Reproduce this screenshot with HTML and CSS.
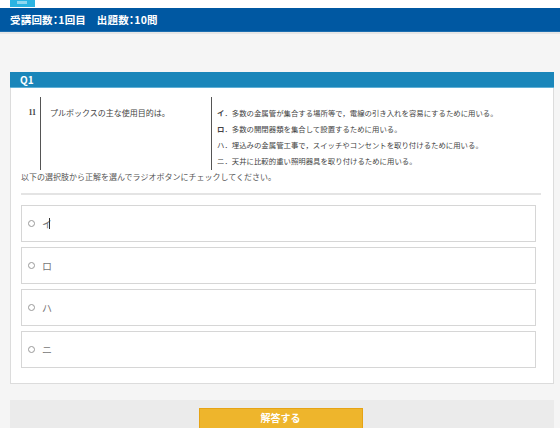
FILE: index.html
```html
<!DOCTYPE html>
<html lang="ja">
<head>
<meta charset="utf-8">
<link rel="stylesheet" href="styles.css">
</head>
<body>
<div class="top"><span class="topbtn"><span class="topbtn-line"></span></span></div>
<header class="bar">受講回数：1回目　出題数：10問</header>
<div class="sep"></div>
<main class="wrap">
  <section class="card">
    <div class="card-head">Q1</div>
    <div class="card-body">
      <div class="qtable">
        <div class="qnum">11</div>
        <div class="qtext">プルボックスの主な使用目的は。</div>
        <div class="qopts">
          <div class="qopt"><b>イ</b>．多数の金属管が集合する場所等で，電線の引き入れを容易にするために用いる。</div>
          <div class="qopt"><b>ロ</b>．多数の開閉器類を集合して設置するために用いる。</div>
          <div class="qopt">ハ．埋込みの金属管工事で，スイッチやコンセントを取り付けるために用いる。</div>
          <div class="qopt">ニ．天井に比較的重い照明器具を取り付けるために用いる。</div>
        </div>
      </div>
      <p class="instr">以下の選択肢から正解を選んでラジオボタンにチェックしてください。</p>
      <div class="rule"></div>
      <div class="choices">
        <label class="choice"><span class="radio"></span><span class="clabel">イ</span><span class="caret"></span></label>
        <label class="choice"><span class="radio"></span><span class="clabel">ロ</span></label>
        <label class="choice"><span class="radio"></span><span class="clabel">ハ</span></label>
        <label class="choice"><span class="radio"></span><span class="clabel">ニ</span></label>
      </div>
    </div>
  </section>
  <div class="footer">
    <button class="submit">解答する</button>
  </div>
</main>
</body>
</html>
```
FILE: styles.css
```css
* { box-sizing: border-box; }
html, body { margin: 0; padding: 0; }
body {
  width: 560px;
  height: 428px;
  overflow: hidden;
  background: #f5f5f5;
  font-family: "Noto Sans CJK JP", "Noto Sans", sans-serif;
}
.top {
  height: 8px;
  background: #fff;
  padding-left: 10px;
}
.topbtn {
  display: block;
  width: 25px;
  height: 7px;
  background: #2bb4e2;
  position: relative;
}
.topbtn-line {
  position: absolute;
  left: 7px;
  top: 1px;
  width: 10px;
  height: 3px;
  background: #8fd8f0;
}
.bar {
  height: 24px;
  background: #0058a2;
  border-bottom: 1px solid #1d6eb0;
  color: #fff;
  font-size: 10.5px;
  font-weight: bold;
  line-height: 23px;
  padding-left: 10px;
  font-feature-settings: "palt";
  letter-spacing: 0.2px;
}
.sep {
  height: 2px;
  background: #e6e6e6;
}
.wrap {
  padding: 38px 6px 0 10px;
}
.card {
  background: #fff;
  border: 1px solid #dcdcdc;
  border-top: none;
}
.card-head {
  height: 16px;
  background: #1a86ba;
  border-bottom: 1px solid #5fb0d6;
  color: #fff;
  font-size: 10px;
  font-weight: bold;
  line-height: 15px;
  padding-left: 10px;
  margin: 0 -1px;
}
.card-body {
  padding: 9px 11px 15px 10px;
}
.qtable {
  display: grid;
  grid-template-columns: 19px 171px 1fr;
  height: 73px;
  color: #444;
  font-size: 7.4px;
}
.qnum {
  text-align: right;
  padding: 8px 4px 0 0;
  line-height: 16px;
  font-family: "Liberation Serif", serif;
  font-size: 8px;
  font-weight: bold;
}
.qtext {
  border-left: 1px solid #555;
  padding: 8px 0 0 9px;
  line-height: 16px;
  font-size: 8px;
}
.qopts {
  border-left: 1px solid #555;
  padding: 8px 0 0 5px;
}
.qopt {
  line-height: 16px;
  height: 16px;
  white-space: nowrap;
}
.instr {
  margin: 0;
  height: 16px;
  line-height: 14px;
  font-size: 8px;
  color: #555;
}
.rule {
  height: 2px;
  background: #e4e4e4;
  margin: 7px 1px 0 0;
}
.choices {
  display: flex;
  flex-direction: column;
  gap: 5px;
  margin-top: 10px;
  margin-right: 6px;
}
.choice {
  display: flex;
  align-items: center;
  height: 37px;
  border: 1px solid #d6d6d6;
  padding-left: 6px;
  color: #777;
  font-size: 10px;
}
.radio {
  width: 7px;
  height: 7px;
  border: 1px solid #999;
  border-radius: 50%;
  margin-right: 7px;
}
.clabel {
  line-height: 12px;
}
.caret {
  width: 1px;
  height: 11px;
  background: #333;
  margin-left: -3px;
}
.footer {
  margin-top: 16px;
  height: 40px;
  background: #ebebeb;
  padding-top: 8px;
  display: flex;
  justify-content: center;
}
.submit {
  width: 164px;
  height: 24px;
  background: #eeb52c;
  border: 1px solid #e6a314;
  color: #fff;
  font-family: "Noto Sans CJK JP", sans-serif;
  font-size: 10px;
  font-weight: bold;
  padding: 0 0 6px 0;
  margin-left: -3px;
}
```
